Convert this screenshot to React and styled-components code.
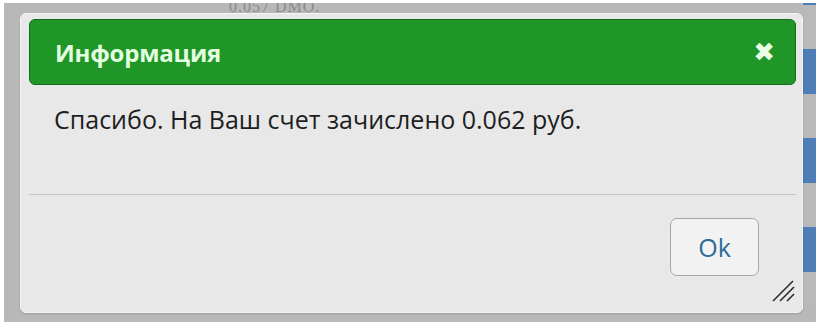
import React from "react";
import styled, { createGlobalStyle } from "styled-components";

const Global = createGlobalStyle`
  html, body { margin: 0; padding: 0; background: #ffffff; }
  body { width: 820px; height: 330px; overflow: hidden; }
`;

const Backdrop = styled.div`
  box-sizing: border-box;
  margin: 3px 4px 0 4px;
  width: 812px;
  height: 319px;
  background:
    repeating-linear-gradient(to bottom, #4f7db5 0, #4f7db5 45px, #b9b9b9 45px, #b9b9b9 89px) 799px -43px / 13px 348px no-repeat,
    #b8b8b8;
  padding: 10px 13px 9px 16px;
  display: flex;
  position: relative;
  overflow: hidden;
`;

const FaintText = styled.div`
  position: absolute;
  top: -5px;
  left: 225px;
  font: 16px "Liberation Serif", serif;
  color: #8a8a8a;
  letter-spacing: 1px;
`;

const Dialog = styled.div`
  box-sizing: border-box;
  width: 783px;
  height: 300px;
  background: #e8e8e8;
  border: 1px solid #f4f4f4;
  border-radius: 6px;
  padding: 5px 6px 0 8px;
  display: flex;
  flex-direction: column;
  position: relative;
  box-shadow: 0 1px 2px rgba(0,0,0,0.15);
  z-index: 1;
`;

const Header = styled.div`
  box-sizing: border-box;
  height: 66px;
  background: #1f9627;
  border: 1px solid #146b1a;
  border-radius: 6px;
  display: flex;
  align-items: center;
  justify-content: space-between;
  padding: 0 20px 0 25px;
`;

const Title = styled.span`
  font-family: "Open Sans", sans-serif;
  font-weight: 700;
  font-size: 24px;
  color: #e4ffe0;
  letter-spacing: -0.2px;
`;

const Close = styled.span`
  font-family: "DejaVu Sans", sans-serif;
  font-weight: 700;
  font-size: 26px;
  color: #eaffe6;
  line-height: 1;
`;

const Body = styled.div`
  height: 110px;
  box-sizing: border-box;
  padding: 17px 0 0 25px;
  font-family: "Open Sans", sans-serif;
  font-size: 25px;
  color: #1e1e1e;
  border-bottom: 1px solid #c4c4c4;
`;

const Footer = styled.div`
  flex: 1;
  display: flex;
  justify-content: flex-end;
  align-items: flex-start;
  padding: 23px 37px 0 0;
`;

const OkButton = styled.button`
  box-sizing: border-box;
  width: 89px;
  height: 58px;
  border: 1px solid #a6a6a6;
  border-radius: 7px;
  background: #f2f2f2;
  font-family: "Open Sans", sans-serif;
  font-size: 25px;
  color: #2b6c97;
  padding: 0;
`;

const Grip = styled.svg`
  position: absolute;
  right: 6px;
  bottom: 10px;
`;

export default function App() {
  return (
    <>
      <Global />
      <Backdrop>
        <FaintText>0.057 DMO.</FaintText>
        <Dialog>
          <Header>
            <Title>Информация</Title>
            <Close>✖</Close>
          </Header>
          <Body>Спасибо. На Ваш счет зачислено 0.062 руб.</Body>
          <Footer>
            <OkButton>Ok</OkButton>
          </Footer>
          <Grip width="24" height="22" viewBox="0 0 24 22">
            <line x1="1" y1="21" x2="21" y2="1" stroke="#2a2a2a" strokeWidth="1.6" />
            <line x1="8" y1="21" x2="22" y2="7" stroke="#2a2a2a" strokeWidth="1.6" />
            <line x1="15" y1="21" x2="22" y2="14" stroke="#2a2a2a" strokeWidth="1.6" />
          </Grip>
        </Dialog>
      </Backdrop>
    </>
  );
}
